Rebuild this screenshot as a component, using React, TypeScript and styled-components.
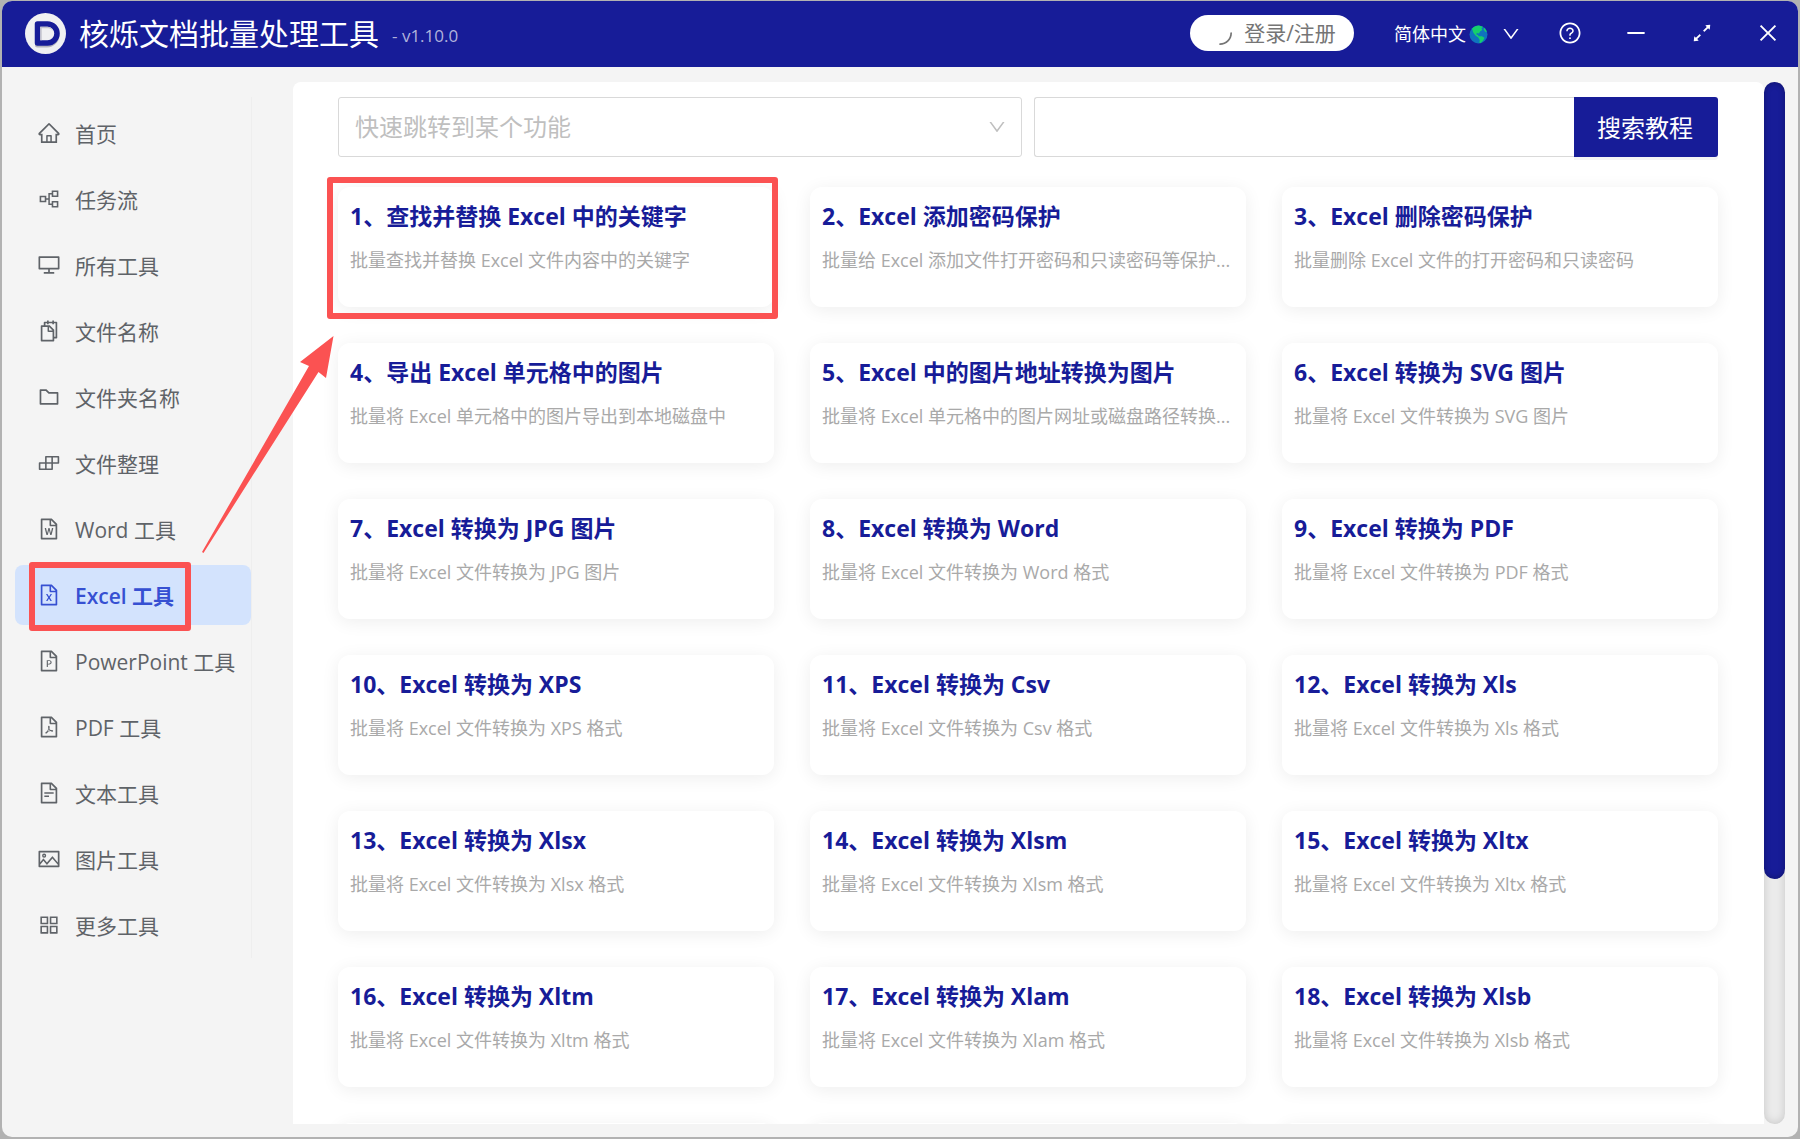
import React from "react";
import styled, { createGlobalStyle } from "styled-components";
import {
  AiOutlineAppstore,
  AiOutlineArrowsAlt,
  AiOutlineBuild,
  AiOutlineClose,
  AiOutlineDesktop,
  AiOutlineDown,
  AiOutlineFileExcel,
  AiOutlineFilePdf,
  AiOutlineFilePpt,
  AiOutlineFileText,
  AiOutlineFileWord,
  AiOutlineFolder,
  AiOutlineHome,
  AiOutlineLoading,
  AiOutlineMinus,
  AiOutlinePartition,
  AiOutlinePicture,
  AiOutlineQuestionCircle,
  AiOutlineSnippets,
} from "react-icons/ai";

const navy = "#171c98";
const red = "#fb5252";
const font = '"Open Sans", "Noto Sans CJK SC", sans-serif';

const Global = createGlobalStyle`
  *, *::before, *::after { box-sizing: border-box; }
  body { margin: 0; background: #b2b2b2; font-family: ${font}; }
  button, input, select { font-family: inherit; margin: 0; }
`;

const Page = styled.div`
  height: 100vh;
  padding: 1px 2px 2px;
`;

const Window = styled.div`
  position: relative;
  display: flex;
  flex-direction: column;
  height: 100%;
  overflow: hidden;
  border-radius: 10px;
  background: #f4f4f4;
`;

const Header = styled.header`
  flex: none;
  display: flex;
  align-items: center;
  height: 66px;
  padding: 0 0 2px 23px;
  background: ${navy};
  color: #fff;
`;

const Title = styled.h1`
  margin: 0 0 0 13px;
  padding-top: 2px;
  font-size: 30px;
  line-height: 40px;
  font-weight: 400;
`;

const Version = styled.span`
  margin-left: 13px;
  padding-top: 6px;
  font-size: 17px;
  line-height: 24px;
  color: #b0b2dc;
`;

const HeaderTools = styled.div`
  display: flex;
  align-items: center;
  margin-left: auto;
`;

const Login = styled.button`
  display: flex;
  align-items: center;
  justify-content: center;
  gap: 12px;
  width: 164px;
  height: 36px;
  padding: 0;
  border: 0;
  border-radius: 18px;
  background: #fff;
  color: #757575;
  font-size: 21px;
  line-height: 30px;

  svg { transform: rotate(90deg); }
`;

const Language = styled.button`
  display: flex;
  align-items: center;
  margin: 0 19px 0 40px;
  padding: 2px 0 0;
  border: 0;
  background: none;
  color: #fff;
  font-size: 18px;
  line-height: 28px;
`;

const LanguageName = styled.span`
  margin-right: 3px;
`;

const LanguageArrow = styled.span`
  display: flex;
  margin-left: 13px;
`;

const WindowButtons = styled.div`
  display: flex;
  gap: 6px;
`;

const ToolButton = styled.button`
  display: flex;
  align-items: center;
  justify-content: center;
  width: 60px;
  height: 40px;
  padding: 0;
  border: 0;
  background: none;
  color: #fff;
`;

const Body = styled.div`
  flex: 1;
  display: flex;
  min-height: 0;
  padding: 15px 13px 13px;
`;

const Nav = styled.nav`
  flex: none;
  align-self: flex-start;
  width: 237px;
  margin: 15px 41px 0 0;
  padding-top: 3px;
  border-right: 1px solid #eeeeee;
`;

const NavLink = styled.a<{ $active?: boolean }>`
  position: relative;
  display: flex;
  align-items: center;
  gap: 14px;
  height: 60px;
  margin: 3px 0;
  padding-left: 22px;
  border-radius: 8px;
  background: ${(p) => (p.$active ? "#d3e3fd" : "transparent")};
  color: ${(p) => (p.$active ? "#3650d2" : "#5f6368")};
  font-size: 21px;
  line-height: 32px;
  font-weight: ${(p) => (p.$active ? 600 : 400)};
  white-space: nowrap;
  text-decoration: none;

  & + & { margin-top: 6px; }
`;

const NavLabel = styled.span`
  padding-top: 2px;
`;

const NavMark = styled.span`
  position: absolute;
  inset: -3px 60px -6px 14px;
  border: 6px solid ${red};
  border-radius: 3px;
`;

const Panel = styled.main`
  flex: 1;
  min-width: 0;
  overflow: hidden;
  padding: 15px 46px 0 45px;
  border-radius: 8px 8px 0 0;
  background: #fff;
`;

const Tools = styled.div`
  display: grid;
  grid-template-columns: 1fr 1fr;
  gap: 12px;
  margin-bottom: 30px;
`;

const SelectBox = styled.div`
  position: relative;
  display: flex;
  color: #bfbfbf;

  svg { position: absolute; right: 15px; top: 20px; pointer-events: none; }
`;

const Select = styled.select`
  width: 100%;
  height: 60px;
  padding: 0 50px 2px 16px;
  border: 1px solid #d9d9d9;
  border-radius: 3px;
  background: #fff;
  color: #bfbfbf;
  font-size: 24px;
  appearance: none;
`;

const Search = styled.form`
  display: flex;
`;

const SearchInput = styled.input`
  flex: 1;
  min-width: 0;
  height: 60px;
  padding: 0 16px;
  border: 1px solid #d9d9d9;
  border-right: 0;
  border-radius: 3px 0 0 3px;
  font-size: 24px;
`;

const SearchButton = styled.button`
  width: 144px;
  height: 60px;
  padding: 0 2px 2px 0;
  border: 0;
  border-radius: 0 3px 3px 0;
  background: ${navy};
  box-shadow: 0 3px 0 rgba(0, 0, 0, 0.04);
  color: #fff;
  font-size: 24px;
`;

const Cards = styled.div`
  display: grid;
  grid-template-columns: repeat(3, minmax(0, 1fr));
  gap: 36px;
`;

const Card = styled.article`
  position: relative;
  height: 120px;
  padding: 12px;
  border-radius: 12px;
  background: #fff;
  box-shadow: 0 3px 18px rgba(0, 0, 0, 0.07);
`;

const CardTitle = styled.h2`
  margin: 0;
  color: ${navy};
  font-size: 23px;
  line-height: 34px;
  font-weight: 700;
  white-space: nowrap;
`;

const CardText = styled.p`
  margin: 13px 0 0;
  overflow: hidden;
  color: #a9a9a9;
  font-size: 18px;
  line-height: 28px;
  white-space: nowrap;
`;

const CardMark = styled.span`
  position: absolute;
  inset: -10px -4px -12px -11px;
  border: 6px solid ${red};
  border-radius: 3px;
`;

const Track = styled.div`
  flex: none;
  width: 21px;
  border-radius: 11px;
  background: #ebebeb;
  box-shadow: inset 0 0 8px rgba(0, 0, 0, 0.16);
`;

const Thumb = styled.div`
  height: 797px;
  border-radius: 11px;
  background: ${navy};
  box-shadow: inset 0 0 6px rgba(0, 0, 0, 0.3);
`;

const Arrow = styled.svg`
  position: absolute;
  left: 200px;
  top: 335px;
  pointer-events: none;
`;

const links = [
  { label: "首页", Icon: AiOutlineHome },
  { label: "任务流", Icon: AiOutlinePartition },
  { label: "所有工具", Icon: AiOutlineDesktop },
  { label: "文件名称", Icon: AiOutlineSnippets },
  { label: "文件夹名称", Icon: AiOutlineFolder },
  { label: "文件整理", Icon: AiOutlineBuild },
  { label: "Word 工具", Icon: AiOutlineFileWord },
  { label: "Excel 工具", Icon: AiOutlineFileExcel, active: true },
  { label: "PowerPoint 工具", Icon: AiOutlineFilePpt },
  { label: "PDF 工具", Icon: AiOutlineFilePdf },
  { label: "文本工具", Icon: AiOutlineFileText },
  { label: "图片工具", Icon: AiOutlinePicture },
  { label: "更多工具", Icon: AiOutlineAppstore },
];

const convert = (name: string) => [`Excel 转换为 ${name}`, `批量将 Excel 文件转换为 ${name} 格式`];

const features = [
  ["查找并替换 Excel 中的关键字", "批量查找并替换 Excel 文件内容中的关键字"],
  ["Excel 添加密码保护", "批量给 Excel 添加文件打开密码和只读密码等保护..."],
  ["Excel 删除密码保护", "批量删除 Excel 文件的打开密码和只读密码"],
  ["导出 Excel 单元格中的图片", "批量将 Excel 单元格中的图片导出到本地磁盘中"],
  ["Excel 中的图片地址转换为图片", "批量将 Excel 单元格中的图片网址或磁盘路径转换..."],
  ["Excel 转换为 SVG 图片", "批量将 Excel 文件转换为 SVG 图片"],
  ["Excel 转换为 JPG 图片", "批量将 Excel 文件转换为 JPG 图片"],
  ...["Word", "PDF", "XPS", "Csv", "Xls", "Xlsx", "Xlsm", "Xltx", "Xltm", "Xlam", "Xlsb"].map(convert),
];

const upcoming = ["next-1", "next-2", "next-3"];

const Logo = () => (
  <svg width="41" height="41" viewBox="0 0 41 41" aria-hidden="true">
    <circle cx="20.5" cy="20.5" r="20.5" fill="#f0f0f2" />
    <path d="M12.500 12h9.500a10 10 0 0 1 0 20h-9.500z" fill="none" stroke="#b4b4bd" strokeWidth="5" strokeLinejoin="round" />
    <path d="M12.500 11h10a9.500 9.500 0 0 1 0 19h-10z" fill="#f0f0f2" stroke={navy} strokeWidth="5.500" strokeLinejoin="round" />
    <path d="M15.200 13.700h7a6.700 6.700 0 0 1 6 4c-2-2-4-2.500-6-2.500h-5.500v12h-1.500z" fill="#c2c2cc" />
  </svg>
);

const Globe = () => (
  <svg width="19" height="19" viewBox="0 0 19 19" aria-hidden="true">
    <circle cx="9.500" cy="9.500" r="9" fill="#0f74bd" />
    <path
      d="M3 3.800C5 1.500 7.500.5 10 .6l4 1.200-1.500 1.700.8 1.500-2 1.200-1.400 2.300-2-.5-.6 1.200 1.500.8 1 1.200H13l2.500 1.500-1.500 3-2.600 2.600-1-.2.3-3.200-1.500-2.300-2.700-2.200L4.500 8z"
      fill="#16cf6c"
    />
    <path d="M15 2.600l2 2.400.8 2-1.600-.2-1.400-2z" fill="#16cf6c" />
  </svg>
);

export default function App() {
  return (
    <Page>
      <Global />
      <Window>
        <Header>
          <Logo />
          <Title>核烁文档批量处理工具</Title>
          <Version>- v1.10.0</Version>
          <HeaderTools>
            <Login type="button">
              <AiOutlineLoading size={24} />
              登录/注册
            </Login>
            <Language type="button">
              <LanguageName>简体中文</LanguageName>
              <Globe />
              <LanguageArrow>
                <AiOutlineDown size={20} />
              </LanguageArrow>
            </Language>
            <WindowButtons>
              <ToolButton type="button" aria-label="帮助">
                <AiOutlineQuestionCircle size={24} />
              </ToolButton>
              <ToolButton type="button" aria-label="最小化">
                <AiOutlineMinus size={24} />
              </ToolButton>
              <ToolButton type="button" aria-label="最大化">
                <AiOutlineArrowsAlt size={24} />
              </ToolButton>
              <ToolButton type="button" aria-label="关闭">
                <AiOutlineClose size={24} />
              </ToolButton>
            </WindowButtons>
          </HeaderTools>
        </Header>
        <Body>
          <Nav>
            {links.map(({ label, Icon, active }) => (
              <NavLink key={label} href="#" $active={active} aria-current={active ? "page" : undefined}>
                <Icon size={24} />
                <NavLabel>{label}</NavLabel>
                {active && <NavMark />}
              </NavLink>
            ))}
          </Nav>
          <Panel>
            <Tools>
              <SelectBox>
                <Select aria-label="快速跳转到某个功能" defaultValue="">
                  <option value="">快速跳转到某个功能</option>
                </Select>
                <AiOutlineDown size={20} />
              </SelectBox>
              <Search onSubmit={(e) => e.preventDefault()}>
                <SearchInput type="text" aria-label="搜索教程" />
                <SearchButton type="submit">搜索教程</SearchButton>
              </Search>
            </Tools>
            <Cards>
              {features.map(([title, text], i) => (
                <Card key={title}>
                  <CardTitle>{`${i + 1}、${title}`}</CardTitle>
                  <CardText>{text}</CardText>
                  {i === 0 && <CardMark />}
                </Card>
              ))}
              {upcoming.map((key) => (
                <Card key={key} />
              ))}
            </Cards>
          </Panel>
          <Track>
            <Thumb />
          </Track>
        </Body>
        <Arrow width="134" height="218" viewBox="0 0 134 218" aria-hidden="true">
          <path d="M131.500 0L98 26l9 4L0 216l1.500 1L116.500 36l7.500 6z" fill={red} />
        </Arrow>
      </Window>
    </Page>
  );
}
